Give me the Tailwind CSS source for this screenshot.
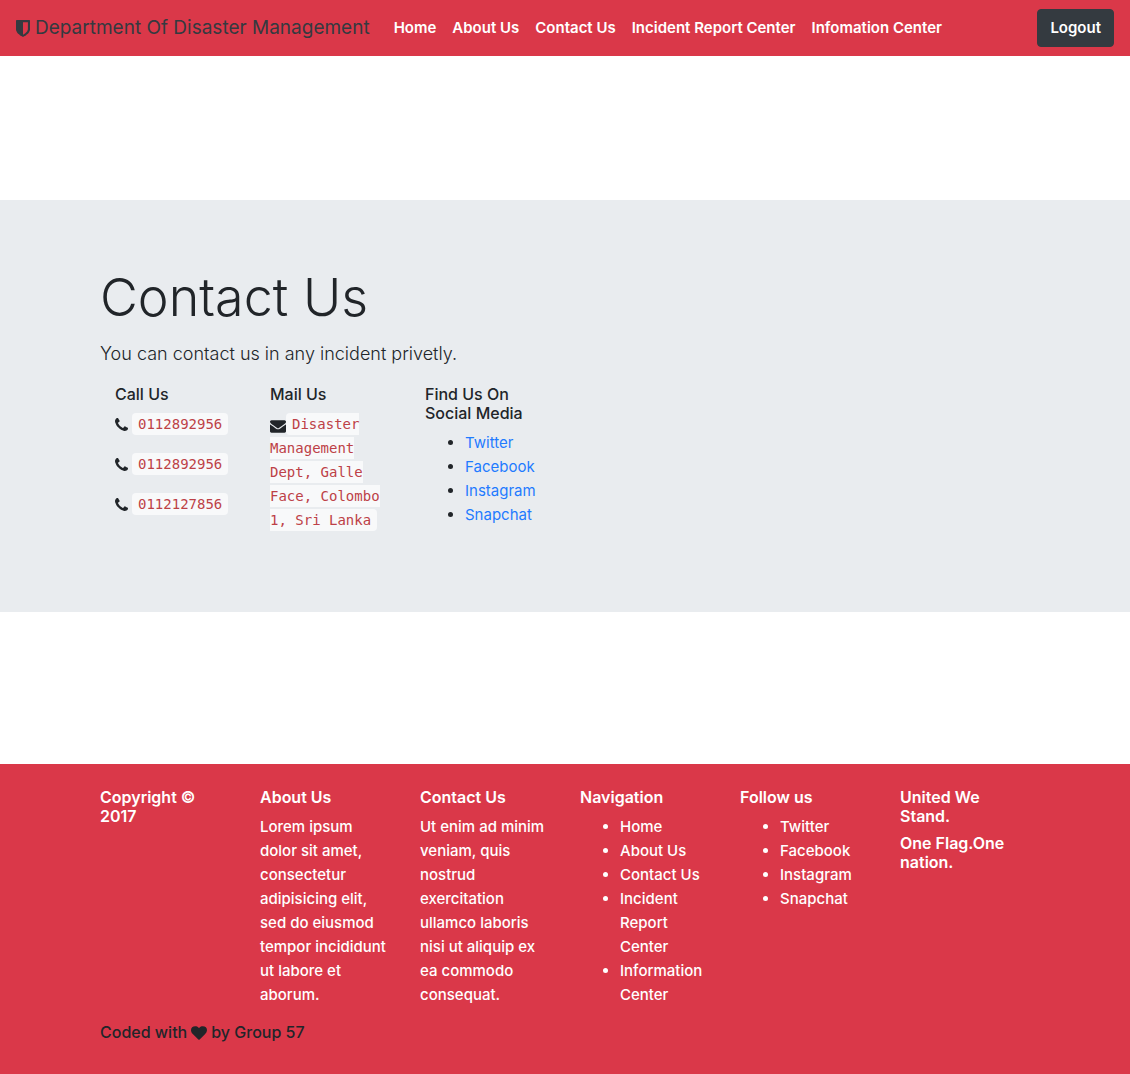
<!DOCTYPE html>
<html lang="en">
<head>
<meta charset="utf-8">
<meta name="viewport" content="width=device-width, initial-scale=1">
<title>Contact Us - Department Of Disaster Management</title>
<script src="https://cdn.jsdelivr.net/npm/@tailwindcss/browser@4"></script>
</head>
<body class="flex min-h-screen flex-col bg-white font-['Inter',sans-serif] text-[15px] leading-6 text-[#212529]">
<svg class="hidden" aria-hidden="true">
  <symbol id="phone" viewBox="192 256 1408 1408"><path d="M1600 1240q0 27-10 70.5t-21 68.5q-21 50-122 106-94 51-186 51-27 0-53-3.5t-57.5-12.5-47-14.5-55.5-20.5-49-18q-98-35-175-83-127-79-264-216t-216-264q-48-77-83-175-3-9-18-49t-20.5-55.5-14.5-47-12.5-57.5-3.5-53q0-92 51-186 56-101 106-122 25-11 68.5-21t70.5-10q14 0 21 3 18 6 53 76 11 19 30 54t35 63.5 31 53.5q3 4 17.5 25t21.5 35.5 7 28.5q0 20-28.5 50t-62 55-62 53-28.5 46q0 9 5 22.5t8.5 20.5 14 24 11.5 19q76 137 174 235t235 174q2 1 19 11.5t24 14 20.5 8.5 22.5 5q18 0 46-28.5t53-62 55-62 50-28.5q14 0 28.5 7t35.5 21.5 25 17.5q25 15 53.5 31t63.5 35 54 30q70 35 76 53 3 7 3 21z" transform="translate(0 128)"/></symbol>
</svg>

<nav class="flex min-h-14 items-center bg-[#da3849] px-4">
  <a href="#" class="mr-6 flex items-center gap-[5px] whitespace-nowrap text-[19px] leading-[30px] text-[#343a40]">
    <svg class="h-[17px] w-[14px] fill-current" viewBox="256 128 1280 1536" aria-hidden="true"><path d="M1344 960V320H896v1137q119-63 213-137 235-184 235-360zm192-768v768q0 86-33.5 170.5t-83 150-118 127.5-126.5 103-121 77.5-89.5 49.5-42.5 20q-12 6-26 6t-26-6q-16-7-42.5-20t-89.5-49.5-121-77.5-126.5-103-118-127.5-83-150T256 960V192q0-26 19-45t45-19h1152q26 0 45 19t19 45z"/></svg>
    Department Of Disaster Management
  </a>
  <ul class="flex grow gap-4 font-semibold whitespace-nowrap text-white">
    <li><a href="#">Home</a></li>
    <li><a href="#">About Us</a></li>
    <li><a href="#">Contact Us</a></li>
    <li><a href="#">Incident Report Center</a></li>
    <li><a href="#">Infomation Center</a></li>
  </ul>
  <button type="button" class="rounded border border-[#343a40] bg-[#343a40] px-3 py-[6px] font-semibold text-white">Logout</button>
</nav>

<main class="mt-36 bg-[#e9ecef] py-16">
  <div class="mx-auto max-w-[960px] px-[15px]">
    <h1 class="mb-2 text-[52px] leading-[67px] font-light">Contact Us</h1>
    <p class="mb-4 text-[18px] leading-[30px] font-light">You can contact us in any incident privetly.</p>
    <div class="grid grid-cols-6">
      <section class="px-[15px]">
        <h2 class="mb-2 text-base leading-[19px] font-medium">Call Us</h2>
        <p class="mb-4 flex h-6 items-center gap-1"><svg class="size-[13px] shrink-0 fill-current" aria-hidden="true"><use href="#phone"/></svg><code class="rounded bg-[#f8f9fa] px-[6px] py-[3px] font-['DejaVu_Sans_Mono',monospace] text-sm leading-4 text-[#bd4147]">0112892956</code></p>
        <p class="mb-4 flex h-6 items-center gap-1"><svg class="size-[13px] shrink-0 fill-current" aria-hidden="true"><use href="#phone"/></svg><code class="rounded bg-[#f8f9fa] px-[6px] py-[3px] font-['DejaVu_Sans_Mono',monospace] text-sm leading-4 text-[#bd4147]">0112892956</code></p>
        <p class="mb-4 flex h-6 items-center gap-1"><svg class="size-[13px] shrink-0 fill-current" aria-hidden="true"><use href="#phone"/></svg><code class="rounded bg-[#f8f9fa] px-[6px] py-[3px] font-['DejaVu_Sans_Mono',monospace] text-sm leading-4 text-[#bd4147]">0112127856</code></p>
      </section>
      <section class="px-[15px]">
        <h2 class="mb-2 text-base leading-[19px] font-medium">Mail Us</h2>
        <p class="mb-4"><svg class="inline-block h-[13px] w-4 fill-current align-text-bottom" viewBox="0 256 1792 1408" aria-hidden="true"><path d="M1792 710v794q0 66-47 113t-113 47H160q-66 0-113-47T0 1504V710q44 49 101 87 362 246 497 345 57 42 92.5 65.5t94.5 48 110 24.5h2q51 0 110-24.5t94.5-48 92.5-65.5q170-123 498-345 57-39 100-87zm0-294q0 79-49 151t-122 123q-376 261-468 325-10 7-42.5 30.5t-54 38-52 32.5-57.5 27-50 9h-2q-23 0-50-9t-57.5-27-52-32.5-54-38T639 1015q-91-64-262-182.5T172 690q-62-42-117-115.5T0 438q0-78 41.5-130T160 256h1472q65 0 112.5 47t47.5 113z"/></svg><code class="rounded bg-[#f8f9fa] px-[6px] py-[3px] font-['DejaVu_Sans_Mono',monospace] text-sm leading-6 text-[#bd4147]">Disaster Management Dept, Galle Face, Colombo 1, Sri Lanka</code></p>
      </section>
      <section class="px-[15px]">
        <h2 class="mb-2 text-base leading-[19px] font-medium">Find Us On Social Media</h2>
        <ul class="mb-4 list-disc pl-10">
          <li><a href="#" class="text-[#1f7bff]">Twitter</a></li>
          <li><a href="#" class="text-[#1f7bff]">Facebook</a></li>
          <li><a href="#" class="text-[#1f7bff]">Instagram</a></li>
          <li><a href="#" class="text-[#1f7bff]">Snapchat</a></li>
        </ul>
      </section>
    </div>
  </div>
</main>

<footer class="mt-[152px] grow bg-[#da3849] pt-6 pb-8">
  <div class="mx-auto max-w-[960px]">
    <div class="grid grid-cols-6 font-medium text-white">
      <section class="px-[15px]">
        <h2 class="mb-2 text-base leading-[19px] font-semibold">Copyright © 2017</h2>
      </section>
      <section class="px-[15px]">
        <h2 class="mb-2 text-base leading-[19px] font-semibold">About Us</h2>
        <p class="mb-4">Lorem ipsum dolor sit amet, consectetur adipisicing elit, sed do eiusmod tempor incididunt ut labore et aborum.</p>
      </section>
      <section class="px-[15px]">
        <h2 class="mb-2 text-base leading-[19px] font-semibold">Contact Us</h2>
        <p class="mb-4">Ut enim ad minim veniam, quis nostrud exercitation ullamco laboris nisi ut aliquip ex ea commodo consequat.</p>
      </section>
      <section class="px-[15px]">
        <h2 class="mb-2 text-base leading-[19px] font-semibold">Navigation</h2>
        <ul class="mb-4 list-disc pl-10">
          <li><a href="#">Home</a></li>
          <li><a href="#">About Us</a></li>
          <li><a href="#">Contact Us</a></li>
          <li><a href="#">Incident Report Center</a></li>
          <li><a href="#">Information Center</a></li>
        </ul>
      </section>
      <section class="px-[15px]">
        <h2 class="mb-2 text-base leading-[19px] font-semibold">Follow us</h2>
        <ul class="mb-4 list-disc pl-10">
          <li><a href="#">Twitter</a></li>
          <li><a href="#">Facebook</a></li>
          <li><a href="#">Instagram</a></li>
          <li><a href="#">Snapchat</a></li>
        </ul>
      </section>
      <section class="px-[15px]">
        <h2 class="mb-2 text-base leading-[19px] font-semibold">United We Stand.</h2>
        <h2 class="mb-2 text-base leading-[19px] font-semibold">One Flag.One nation.</h2>
      </section>
    </div>
    <p class="flex items-center gap-1 px-[15px] text-base leading-[19px] font-medium">Coded with
      <svg class="h-[14px] w-4 fill-current" viewBox="0 128 1792 1536" aria-label="love" role="img"><path d="M896 1664q-26 0-44-18l-624-602q-10-8-27.5-26T145 952.5 77 855 23.5 734 0 596q0-220 127-344t351-124q62 0 126.5 21.5t120 58T820 276t76 68q36-36 76-68t95.5-68.5 120-58T1314 128q224 0 351 124t127 344q0 221-229 450l-623 600q-18 18-44 18z"/></svg>
      by Group 57</p>
  </div>
</footer>
</body>
</html>
